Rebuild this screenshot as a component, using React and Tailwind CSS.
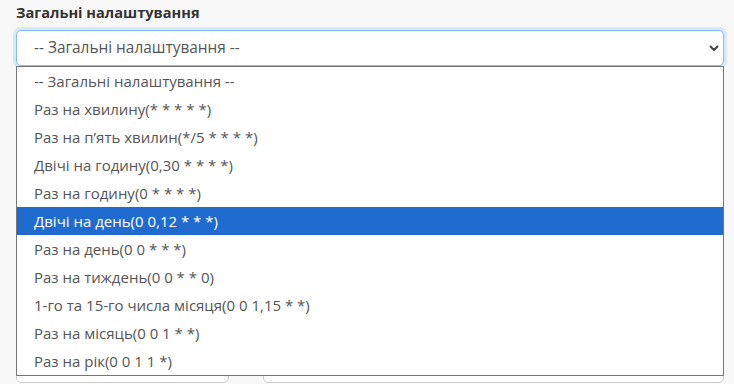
import React from "react";

const options = [
  "-- Загальні налаштування --",
  "Раз на хвилину(* * * * *)",
  "Раз на п’ять хвилин(*/5 * * * *)",
  "Двічі на годину(0,30 * * * *)",
  "Раз на годину(0 * * * *)",
  "Двічі на день(0 0,12 * * *)",
  "Раз на день(0 0 * * *)",
  "Раз на тиждень(0 0 * * 0)",
  "1-го та 15-го числа місяця(0 0 1,15 * *)",
  "Раз на місяць(0 0 1 * *)",
  "Раз на рік(0 0 1 1 *)",
];

const App = () => {
  const selected = 5;

  return (
    <div
      className="h-[384px] w-[734px] overflow-hidden bg-[#f8f8f8] px-4"
      style={{ fontFamily: '"Open Sans", "Noto Sans", sans-serif' }}
    >
      <label className="block text-[14.6px] font-bold leading-[24px] text-[#333]">
        Загальні налаштування
      </label>

      <div className="relative mt-[6px] w-[708px]">
        {/* select */}
        <div className="flex h-[36px] items-center justify-between rounded-[5px] border border-[#80bdff] bg-white pl-[17px] pr-[4px] shadow-[0_0_0_3px_rgba(0,123,255,0.12)]">
          <span className="text-[15.4px] text-[#555]">-- Загальні налаштування --</span>
          <svg width="10" height="7" viewBox="0 0 10 7" fill="none" className="mt-[1px]">
            <path
              d="M1.5 1.5L5 5l3.5-3.5"
              stroke="#444"
              strokeWidth="2"
              strokeLinecap="round"
              strokeLinejoin="round"
            />
          </svg>
        </div>

        {/* fields under the open list */}
        <div className="mt-[283px] grid grid-cols-[213px_1fr] gap-[34px]">
          <div className="h-[34px] rounded-[5px] border border-[#ccc] bg-white" />
          <div className="h-[34px] rounded-[5px] border border-[#ccc] bg-white" />
        </div>

        {/* dropdown list */}
        <div className="absolute left-0 top-[36px] w-[708px] border border-[#767676] bg-white">
          {options.map((opt, idx) => (
            <div
              key={idx}
              className={`flex h-[28px] items-center pl-[17px] text-[15px] ${
                idx === selected ? "bg-[#1f6bd0] text-white" : "text-[#555]"
              }`}
            >
              {opt}
            </div>
          ))}
        </div>
      </div>
    </div>
  );
};

export default App;
